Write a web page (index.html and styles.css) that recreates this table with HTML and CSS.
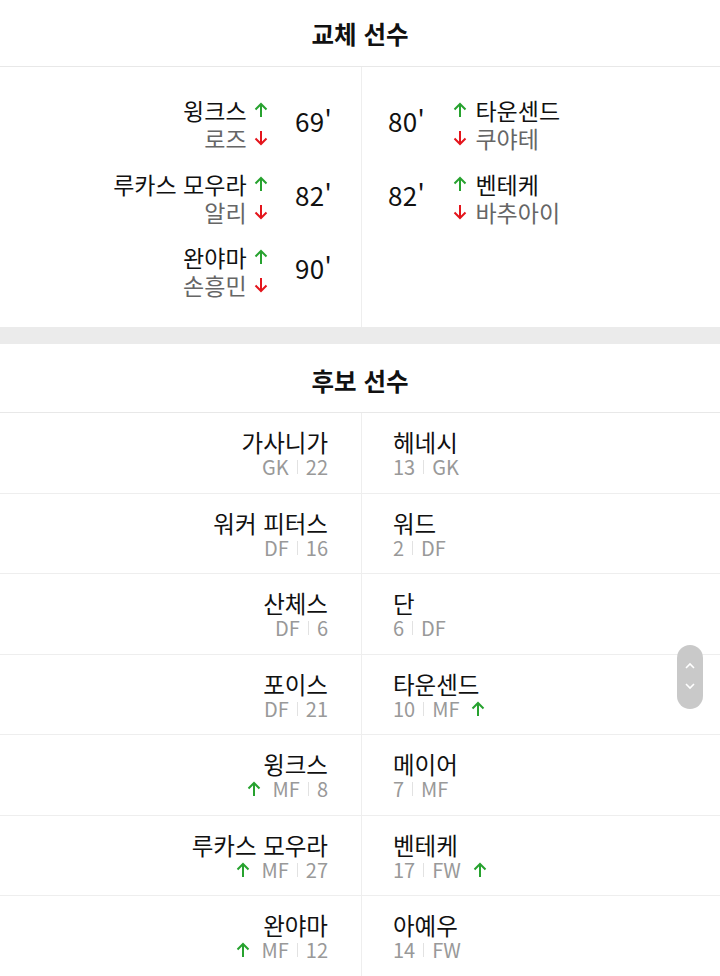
FILE: index.html
```html
<!DOCTYPE html>
<html lang="ko">
<head>
<meta charset="utf-8">
<link rel="stylesheet" href="styles.css">
</head>
<body>
<svg width="0" height="0" class="defs">
  <defs>
    <symbol id="up" viewBox="0 0 14 16"><path d="M7 15V2M1.5 7.5L7 2l5.5 5.5" fill="none" stroke="currentColor" stroke-width="2"/></symbol>
    <symbol id="down" viewBox="0 0 14 16"><path d="M7 1v13M1.5 8.5L7 14l5.5-5.5" fill="none" stroke="currentColor" stroke-width="2"/></symbol>
  </defs>
</svg>

<section class="block">
  <h2 class="title t1">교체 선수</h2>
  <div class="subs">
    <div class="col col-left">
      <div class="grp">
        <div class="lines">
          <div class="line in">윙크스 <svg class="ar up"><use href="#up"/></svg></div>
          <div class="line out">로즈 <svg class="ar down"><use href="#down"/></svg></div>
        </div>
        <div class="min">69'</div>
      </div>
      <div class="grp">
        <div class="lines">
          <div class="line in">루카스 모우라 <svg class="ar up"><use href="#up"/></svg></div>
          <div class="line out">알리 <svg class="ar down"><use href="#down"/></svg></div>
        </div>
        <div class="min">82'</div>
      </div>
      <div class="grp">
        <div class="lines">
          <div class="line in">완야마 <svg class="ar up"><use href="#up"/></svg></div>
          <div class="line out">손흥민 <svg class="ar down"><use href="#down"/></svg></div>
        </div>
        <div class="min">90'</div>
      </div>
    </div>
    <div class="col col-right">
      <div class="grp">
        <div class="min">80'</div>
        <div class="lines">
          <div class="line in"><svg class="ar up"><use href="#up"/></svg> 타운센드</div>
          <div class="line out"><svg class="ar down"><use href="#down"/></svg> 쿠야테</div>
        </div>
      </div>
      <div class="grp">
        <div class="min">82'</div>
        <div class="lines">
          <div class="line in"><svg class="ar up"><use href="#up"/></svg> 벤테케</div>
          <div class="line out"><svg class="ar down"><use href="#down"/></svg> 바추아이</div>
        </div>
      </div>
    </div>
  </div>
</section>

<div class="band"></div>

<section class="block">
  <h2 class="title t2">후보 선수</h2>
  <div class="bench">
    <div class="cell l"><div class="name">가사니가</div><div class="meta"><span>GK</span><i class="sep"></i><span>22</span></div></div>
    <div class="cell r"><div class="name">헤네시</div><div class="meta"><span>13</span><i class="sep"></i><span>GK</span></div></div>

    <div class="cell l"><div class="name">워커 피터스</div><div class="meta"><span>DF</span><i class="sep"></i><span>16</span></div></div>
    <div class="cell r"><div class="name">워드</div><div class="meta"><span>2</span><i class="sep"></i><span>DF</span></div></div>

    <div class="cell l"><div class="name">산체스</div><div class="meta"><span>DF</span><i class="sep"></i><span>6</span></div></div>
    <div class="cell r"><div class="name">단</div><div class="meta"><span>6</span><i class="sep"></i><span>DF</span></div></div>

    <div class="cell l"><div class="name">포이스</div><div class="meta"><span>DF</span><i class="sep"></i><span>21</span></div></div>
    <div class="cell r"><div class="name">타운센드</div><div class="meta"><span>10</span><i class="sep"></i><span>MF</span><svg class="ar up m-after"><use href="#up"/></svg></div></div>

    <div class="cell l"><div class="name">윙크스</div><div class="meta"><svg class="ar up m-before"><use href="#up"/></svg><span>MF</span><i class="sep"></i><span>8</span></div></div>
    <div class="cell r"><div class="name">메이어</div><div class="meta"><span>7</span><i class="sep"></i><span>MF</span></div></div>

    <div class="cell l"><div class="name">루카스 모우라</div><div class="meta"><svg class="ar up m-before"><use href="#up"/></svg><span>MF</span><i class="sep"></i><span>27</span></div></div>
    <div class="cell r"><div class="name">벤테케</div><div class="meta"><span>17</span><i class="sep"></i><span>FW</span><svg class="ar up m-after"><use href="#up"/></svg></div></div>

    <div class="cell l"><div class="name">완야마</div><div class="meta"><svg class="ar up m-before"><use href="#up"/></svg><span>MF</span><i class="sep"></i><span>12</span></div></div>
    <div class="cell r"><div class="name">아예우</div><div class="meta"><span>14</span><i class="sep"></i><span>FW</span></div></div>
  </div>
</section>

<div class="scroller">
  <svg width="26" height="64" viewBox="0 0 26 64"><path d="M9 23l4-4 4 4M9 39l4 4 4-4" fill="none" stroke="#fff" stroke-width="1.6"/></svg>
</div>
</body>
</html>
```

FILE: styles.css
```css
* { box-sizing: border-box; }
html, body { margin: 0; padding: 0; background: #fff; }
body {
  width: 720px;
  height: 976px;
  overflow: hidden;
  font-family: "Noto Sans CJK KR", "Noto Sans", sans-serif;
  color: #111;
}
.defs { position: absolute; width: 0; height: 0; }

.title {
  margin: 0;
  border-bottom: 1px solid #e8e8e8;
  display: flex;
  align-items: center;
  justify-content: center;
  font-size: 24.5px;
  font-weight: 700;
  color: #111;
}
.t1 { height: 67px; padding-top: 0; }
.t2 { height: 69px; padding-top: 4px; }

.subs {
  display: grid;
  grid-template-columns: 362px 1fr;
  height: 260px;
}
.col {
  padding-top: 29px;
  display: flex;
  flex-direction: column;
  gap: 17.5px;
}
.col-left { border-right: 1px solid #eee; align-items: flex-end; padding-right: 29px; }
.col-right { align-items: flex-start; padding-left: 26px; }

.grp { display: flex; align-items: center; }
.col-left .grp .min { margin-left: 27px; margin-top: -7px; }
.col-right .grp .min { margin-right: 27px; width: 38px; margin-top: -7px; }

.lines { display: flex; flex-direction: column; }
.col-left .lines { align-items: flex-end; }
.col-right .lines { align-items: flex-start; }

.line {
  height: 28px;
  line-height: 28px;
  font-size: 23px;
  display: flex;
  align-items: center;
  white-space: pre;
}
.line.in { color: #111; }
.line.out { color: #666; }
.col-left .line .ar { margin-left: 1px; }
.col-right .line .ar { margin-right: 2px; }

.min { font-size: 26px; color: #111; letter-spacing: 0.3px; }

.ar { width: 14px; height: 16px; display: inline-block; flex: none; }
.ar.up { color: #27a22f; }
.ar.down { color: #e4151c; }

.band { height: 17px; background: #ebebeb; }

.bench {
  display: grid;
  grid-template-columns: 362px 1fr;
}
.cell {
  height: 80.5px;
  border-bottom: 1px solid #eee;
  padding-top: 15px;
  display: flex;
  flex-direction: column;
}
.cell.l { border-right: 1px solid #eee; align-items: flex-end; padding-right: 33px; }
.cell.r { align-items: flex-start; padding-left: 31px; }

.name { font-size: 23.5px; line-height: 28px; color: #111; }
.meta {
  display: flex;
  align-items: center;
  font-size: 20px;
  line-height: 22px;
  color: #999;
}
.sep {
  display: inline-block;
  width: 1px;
  height: 14px;
  background: #e2e2e2;
  margin: 0 8px;
}
.m-before { margin-right: 12px; }
.m-after { margin-left: 12px; }

.scroller {
  position: absolute;
  left: 677px;
  top: 645px;
  width: 26px;
  height: 64px;
  border-radius: 13px;
  background: #c9c9c9;
}
.scroller svg { display: block; }
```
